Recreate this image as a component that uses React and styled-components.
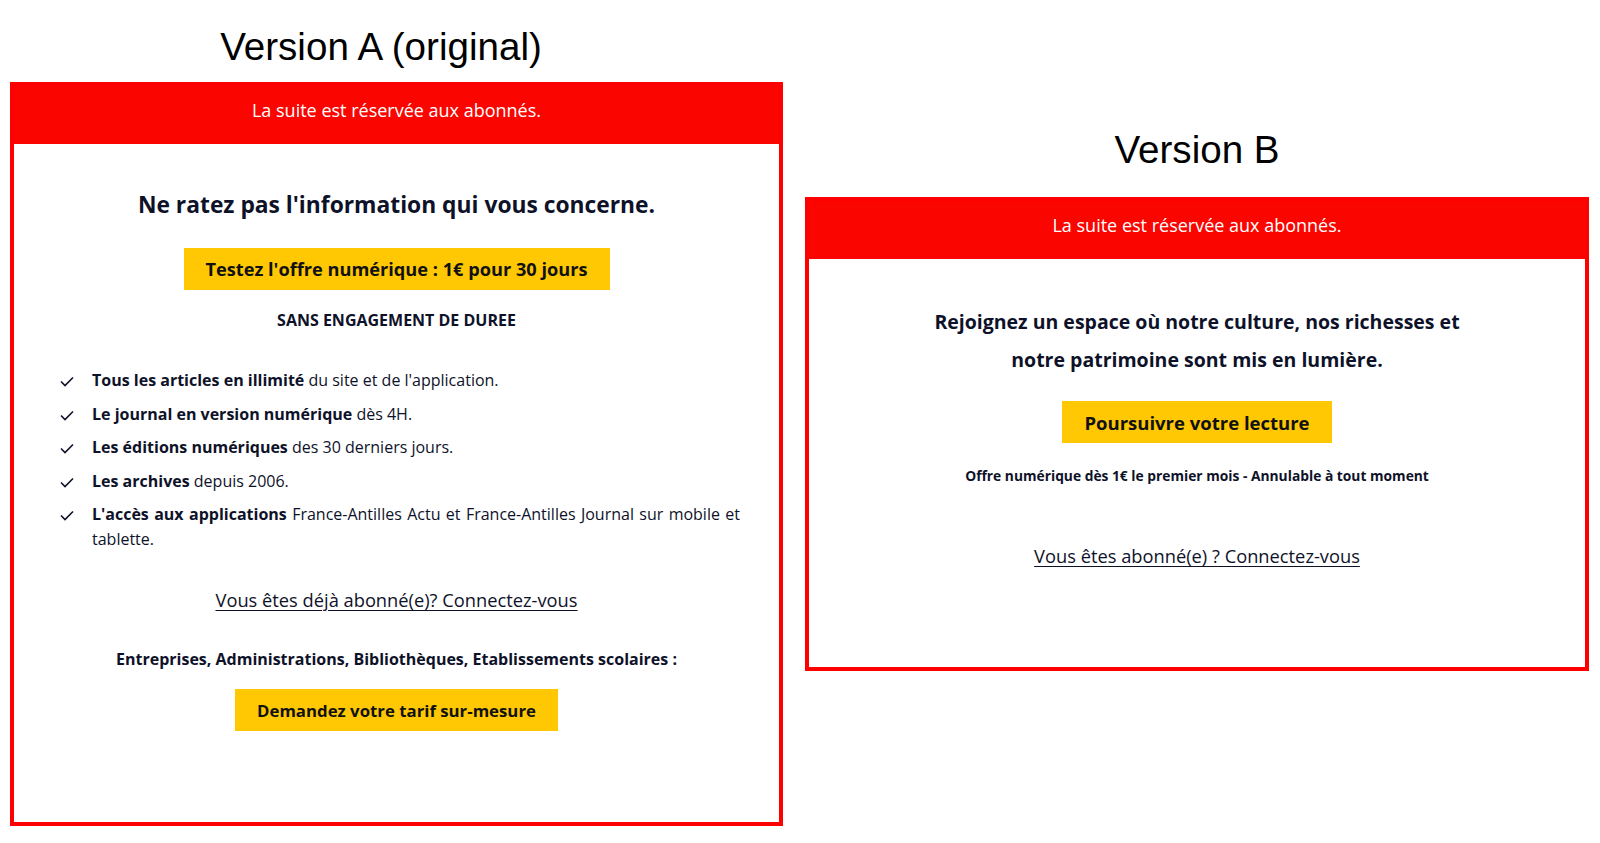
import React from 'react';
import styled, { createGlobalStyle } from 'styled-components';

const RED    = '#fa0500';
const YELLOW = '#ffc802';
const INK    = '#0e1229';

const GlobalStyle = createGlobalStyle`
  body {
    margin     : 0;
    background : #ffffff;
    font-family: 'Open Sans', 'Noto Sans', sans-serif;
    color      : ${ INK };
  }
`;

const Page = styled.div`
  display     : flex;
  align-items : flex-start;
  gap         : 22px;
  padding     : 0 11px 0 10px;
  width       : 1600px;
  box-sizing  : border-box;
`;

const Column = styled.div`
  display        : flex;
  flex-direction : column;
  width          : ${ p => p.$width }px;
  flex-shrink    : 0;
`;

const VersionTitle = styled.h1`
  margin      : ${ p => p.$top }px ${ p => p.$shift || 0 }px ${ p => p.$bottom }px 0;
  font-family : 'Liberation Sans', Arial, sans-serif;
  font-weight : 400;
  font-size   : 38.6px;
  line-height : 44px;
  text-align  : center;
  color       : #000;
`;

const Paywall = styled.section`
  border         : 4px solid #ff0000;
  box-sizing     : border-box;
  height         : ${ p => p.$height }px;
  display        : flex;
  flex-direction : column;
`;

const Banner = styled.div`
  background  : ${ RED };
  height      : 58px;
  padding-top : 13px;
  box-sizing  : border-box;
  color       : #fff;
  font-size   : 18px;
  line-height : 22px;
  text-align  : center;
`;

const Body = styled.div`
  display        : flex;
  flex-direction : column;
  align-items    : center;
  padding-top    : ${ p => p.$top }px;
  text-align     : center;
`;

const Heading = styled.h2`
  margin      : 0;
  font-size   : ${ p => p.$size }px;
  line-height : ${ p => p.$lh }px;
  font-weight : 700;
`;

const CtaButton = styled.a`
  display     : inline-flex;
  align-items : center;
  height      : 42px;
  padding     : 0 22px;
  margin-top  : ${ p => p.$top }px;
  background  : ${ YELLOW };
  color       : #111;
  font-size   : ${ p => p.$size || 18.2 }px;
  font-weight : 700;
  text-decoration: none;
  white-space : nowrap;
`;

const Note = styled.p`
  margin      : ${ p => p.$top }px 0 0;
  font-size   : ${ p => p.$size }px;
  line-height : 20px;
  font-weight : 700;
  text-transform: ${ p => p.$caps ? 'uppercase' : 'none' };
`;

const Perks = styled.ul`
  list-style : none;
  margin     : 38px 0 0;
  padding    : 0 39px 0 46px;
  align-self : stretch;
  text-align : justify;
`;

const Perk = styled.li`
  display     : grid;
  grid-template-columns: 14px 1fr;
  column-gap  : 18px;
  font-size   : 16px;
  line-height : 24.5px;

  & + & {
    margin-top : 9px;
  }

  b { font-weight: 700; }
`;

const Tick = styled.svg`
  width      : 14px;
  height     : 11px;
  margin-top : 8px;
`;

const LoginLink = styled.a`
  margin-top  : ${ p => p.$top }px;
  font-size   : 18.3px;
  line-height : 24px;
  color       : ${ INK };
  text-decoration: underline;
  text-underline-offset: 3px;
  text-decoration-thickness: 1px;
`;

const Check = () => (
  <Tick viewBox="0 0 14 11">
    <polyline points="1,5.5 5,9.5 13,1.5" fill="none" stroke={ INK } strokeWidth="1.6" />
  </Tick>
);

const perks = [
  [ 'Tous les articles en illimité', " du site et de l'application." ],
  [ 'Le journal en version numérique', ' dès 4H.' ],
  [ 'Les éditions numériques', ' des 30 derniers jours.' ],
  [ 'Les archives', ' depuis 2006.' ],
  [ "L'accès aux applications", ' France-Antilles Actu et France-Antilles Journal sur mobile et tablette.' ],
];

const VersionA = () => (
  <Column $width={ 773 }>
    <VersionTitle $top={ 25 } $bottom={ 13 } $shift={ 31 }>Version A (original)</VersionTitle>
    <Paywall $height={ 744 }>
      <Banner>La suite est réservée aux abonnés.</Banner>
      <Body $top={ 46 }>
        <Heading $size={ 22.8 } $lh={ 30 }>Ne ratez pas l'information qui vous concerne.</Heading>
        <CtaButton $top={ 28 }>Testez l'offre numérique : 1€ pour 30 jours</CtaButton>
        <Note $top={ 20 } $size={ 16 } $caps>Sans engagement de duree</Note>
        <Perks>
          { perks.map(([ strong, rest ]) => (
            <Perk key={ strong }>
              <Check />
              <span><b>{ strong }</b>{ rest }</span>
            </Perk>
          )) }
        </Perks>
        <LoginLink $top={ 37 }>Vous êtes déjà abonné(e)? Connectez-vous</LoginLink>
        <Note $top={ 37 } $size={ 16 }>Entreprises, Administrations, Bibliothèques, Etablissements scolaires :</Note>
        <CtaButton $top={ 20 } $size={ 16.8 }>Demandez votre tarif sur-mesure</CtaButton>
      </Body>
    </Paywall>
  </Column>
);

const VersionB = () => (
  <Column $width={ 784 }>
    <VersionTitle $top={ 128 } $bottom={ 25 }>Version B</VersionTitle>
    <Paywall $height={ 474 }>
      <Banner>La suite est réservée aux abonnés.</Banner>
      <Body $top={ 44 }>
        <Heading $size={ 19.5 } $lh={ 38 }>
          Rejoignez un espace où notre culture, nos richesses et<br />
          notre patrimoine sont mis en lumière.
        </Heading>
        <CtaButton $top={ 22 } $size={ 18.5 }>Poursuivre votre lecture</CtaButton>
        <Note $top={ 23 } $size={ 13.8 }>Offre numérique dès 1€ le premier mois - Annulable à tout moment</Note>
        <LoginLink $top={ 58 }>Vous êtes abonné(e) ? Connectez-vous</LoginLink>
      </Body>
    </Paywall>
  </Column>
);

export default function App() {
  return (
    <>
      <GlobalStyle />
      <Page>
        <VersionA />
        <VersionB />
      </Page>
    </>
  );
}
